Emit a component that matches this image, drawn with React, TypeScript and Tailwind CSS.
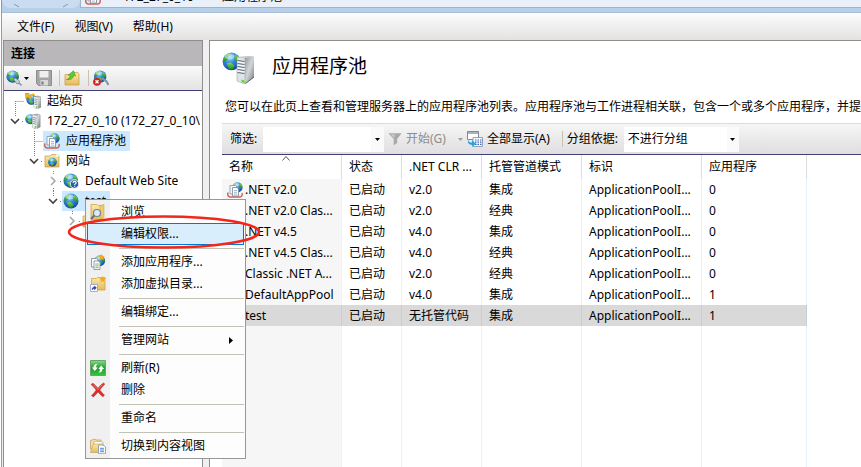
import clsx from "clsx";
import * as React from "react";

type IconProps = { className?: string };

function Defs() {
  return (
    <svg className="absolute size-0" aria-hidden="true">
      <defs>
        <radialGradient id="ocean" cx="0.4" cy="0.25" r="0.8">
          <stop offset="0" stopColor="#9bdcfb" />
          <stop offset="0.45" stopColor="#3388da" />
          <stop offset="1" stopColor="#163f96" />
        </radialGradient>
        <linearGradient id="land" x1="0" y1="0" x2="0" y2="1">
          <stop offset="0" stopColor="#7fd94a" />
          <stop offset="1" stopColor="#1e8a2c" />
        </linearGradient>
        <linearGradient id="steel" x1="0" y1="0" x2="1" y2="1">
          <stop offset="0" stopColor="#8d9194" />
          <stop offset="0.5" stopColor="#d3d6d8" />
          <stop offset="1" stopColor="#6f7376" />
        </linearGradient>
        <linearGradient id="folder" x1="0" y1="0" x2="0" y2="1">
          <stop offset="0" stopColor="#fbe9a9" />
          <stop offset="1" stopColor="#e5b95a" />
        </linearGradient>
        <linearGradient id="green" x1="0" y1="0" x2="0" y2="1">
          <stop offset="0" stopColor="#8ddc8a" />
          <stop offset="0.5" stopColor="#1f9d2b" />
          <stop offset="1" stopColor="#35c53c" />
        </linearGradient>
      </defs>
    </svg>
  );
}

function GlobeShape({ transform }: { transform?: string }) {
  return (
    <g transform={transform}>
      <circle cx="8" cy="8" r="7.5" fill="url(#ocean)" />
      <path d="M1.5 5 4 2 7 1.2 6.5 3.2 4.8 4.5 5 6.5 3 7.5 1 8.5Z" fill="url(#land)" />
      <path d="M11 2 13.5 3.500 15.300 7 14.500 9 12 8.500 10.500 5.500Z" fill="url(#land)" />
      <path d="M4 9.500 7.500 9 10.500 11.500 9 14.800 6 14.500Z" fill="url(#land)" />
      <ellipse cx="6.5" cy="4" rx="4" ry="2.4" fill="#fff" opacity="0.4" />
    </g>
  );
}

function ServerShape({ transform }: { transform?: string }) {
  return (
    <g transform={transform}>
      <path d="M0 1 5 0 9 1 9 13 4 15 0 13.5Z" fill="url(#steel)" stroke="#75797c" strokeWidth="0.5" />
      <path d="M0 1 5 2 5 15 0 13.5Z" fill="#eef0f1" />
      <path d="M0.5 3.5 4.7 4.2M0.5 5.5 4.7 6.2M0.5 7.5 4.7 8.2M0.5 9.5 4.7 10.2" stroke="#6c7a86" strokeWidth="0.8" />
      <path d="M2.5 12h2v1.8h-2z" fill="#4fd52d" />
    </g>
  );
}

function Svg({ children, className = "size-4" }: IconProps & { children: React.ReactNode }) {
  return (
    <svg viewBox="0 0 16 16" className={clsx("shrink-0", className)} aria-hidden="true">
      {children}
    </svg>
  );
}

function GlobeIcon() {
  return (
    <Svg>
      <GlobeShape />
    </Svg>
  );
}

function StartPageIcon() {
  return (
    <Svg>
      <GlobeShape transform="translate(1 1) scale(0.7)" />
      <path d="M0 0h4.5L3.3 1.7C6 2 7 4 6.5 6 5.5 4.5 4 4 2.3 4.2L1 6Z" fill="#f6b51e" stroke="#b87400" strokeWidth="0.4" />
      <path d="M6 2.5 8 1.2 9.5 2.2" stroke="#f6b51e" strokeWidth="1.6" fill="none" />
      <ServerShape transform="translate(9 3) scale(0.76 0.86)" />
    </Svg>
  );
}

function ServerIcon() {
  return (
    <Svg>
      <GlobeShape transform="translate(0 1) scale(0.66)" />
      <ServerShape transform="translate(7.5 1) scale(0.85 1)" />
    </Svg>
  );
}

function ServerLargeIcon() {
  return (
    <svg viewBox="0 0 32 32" className="size-8 shrink-0" aria-hidden="true">
      <GlobeShape transform="scale(1.18)" />
      <path d="M22 5.500 26 4l6 .5V25l-9 7z" fill="url(#steel)" />
      <path d="M15 5 23 6V32l-8-3z" fill="#dfe4e8" stroke="#8d959b" strokeWidth="0.5" />
      <path d="M15 5 24 4l8 .5-9 1.500z" fill="#c9cdd0" />
      <path d="M15.5 8.500 22.500 9.500M15.500 11.500 22.500 12.500M15.500 14.500 22.500 15.500M15.500 17.500 22.500 18.500M15.500 20.500 22.500 21.500" stroke="#5c6b78" strokeWidth="1.200" />
      <path d="M15.500 10 22.500 11M15.500 13 22.500 14M15.500 16 22.500 17M15.500 19 22.500 20" stroke="#fff" strokeWidth="1" />
      <path d="M19.500 27.500 22.500 28.500v2.500l-3-1z" fill="#55df22" />
      <path d="M23.500 31.500 32 25" stroke="#55595c" />
    </svg>
  );
}

function AppPoolIcon({ className }: IconProps) {
  return (
    <Svg className={className}>
      <GlobeShape transform="translate(5 0) scale(0.68)" />
      <path d="M1.200 10.500C.2 12.500.8 14.500 3 15h10c2-.4 2.600-2.300 2-4" fill="none" stroke="#cf6450" strokeWidth="1.500" />
      <path d="M3 3.500h5.500L10 5v7H3z" fill="#f4f8fc" stroke="#8296aa" strokeWidth="0.8" />
      <path d="M5.500 5.500H10L11.500 7v7h-6z" fill="#fff" stroke="#71869b" strokeWidth="0.8" />
      <path d="M7 8.500h3M7 10.300h3M7 12.100h3" stroke="#8fa4b8" strokeWidth="0.8" />
    </Svg>
  );
}

function SitesIcon() {
  return (
    <Svg>
      <path d="M1 3h5l1.500-1.500h6L15 3v11H1z" fill="url(#folder)" stroke="#c59b45" strokeWidth="0.7" />
      <path d="M12 1.500h2.500v2H12z" fill="#fff" />
      <GlobeShape transform="translate(3.800 4.500) scale(0.58)" />
    </Svg>
  );
}

function GlobeHelpIcon() {
  return (
    <Svg>
      <GlobeShape transform="scale(0.96)" />
      <circle cx="11.500" cy="11" r="4.300" fill="#2d5ea8" stroke="#fff" strokeWidth="0.9" />
      <path d="M10 10c0-2.200 3.200-2 3.200-.3 0 1.200-1.500 1-1.500 2.200M11.700 12.800v1" fill="none" stroke="#fff" strokeWidth="1.100" />
    </Svg>
  );
}

function ConnectIcon() {
  return (
    <Svg>
      <GlobeShape transform="scale(0.83)" />
      <path d="M7.500 9.500 9.500 8l4 3-.5 2.500-2 .5Z" fill="#c3d0d9" stroke="#5a6c7a" strokeWidth="0.6" />
      <path d="m13 13 2.500 2.500" stroke="#8298a8" strokeWidth="1.600" />
    </Svg>
  );
}

function DisconnectIcon() {
  return (
    <Svg>
      <GlobeShape transform="translate(0.500 0) scale(0.83)" />
      <path d="m9 8 4.500 3.500L15.500 15" stroke="#8298a8" strokeWidth="2.200" fill="none" />
      <circle cx="4" cy="11.800" r="3.900" fill="#d42020" />
      <path d="m2.500 10.300 3 3m0-3-3 3" stroke="#fff" strokeWidth="1.300" />
    </Svg>
  );
}

function SaveIcon() {
  return (
    <Svg>
      <path d="M.5.5h15v15h-13l-2-2z" fill="#a5a5a5" stroke="#8d8d8d" />
      <path d="M3.500 1h9v6.500h-9z" fill="#f0f0f0" />
      <path d="M4.500 10h7.500v5.500H4.500z" fill="#dadada" />
      <path d="M5.500 11.500h2v3h-2z" fill="#777" />
    </Svg>
  );
}

function UpFolderIcon() {
  return (
    <Svg>
      <path d="M1 4.500h6l1.500-2h5.500l1 1.500v11H1z" fill="url(#folder)" stroke="#c59b45" strokeWidth="0.700" />
      <path d="M2.500 9.500C5 9 6 7.500 6.200 5.200H4.200L9.500.8l2 5-1.800-.4c-.5 3-3 4.900-7.200 4.100z" fill="#5fc936" stroke="#2c8a1c" strokeWidth="0.500" />
    </Svg>
  );
}

function BrowseIcon() {
  return (
    <Svg>
      <path d="M1 .5h6l1 1h4v14H1z" fill="url(#folder)" stroke="#c59b45" strokeWidth="0.700" />
      <path d="M10 1.500 14 .5v13l-3 2z" fill="#f2cb69" stroke="#c59b45" strokeWidth="0.500" />
      <circle cx="7" cy="9" r="3.500" fill="#d6eefc" stroke="#6f8494" strokeWidth="1.200" />
      <path d="M4.300 11.500 1 15" stroke="#66727c" strokeWidth="2" />
    </Svg>
  );
}

function AddAppIcon() {
  return (
    <Svg>
      <GlobeShape transform="translate(4 1) scale(0.720)" />
      <path d="m11.500 0 1 1.800 2.200.4-1.500 1.600.3 2.200-2-1-2 1 .4-2.200L8.300 2.200l2.200-.4z" fill="#f7a823" />
      <path d="M1.500 4.500h5L8 6v7H1.500z" fill="#fff" stroke="#71869b" strokeWidth="0.800" />
      <path d="M4 7h4.500L10 8.500v7H4z" fill="#fff" stroke="#71869b" strokeWidth="0.800" />
      <path d="M5.300 10h3.400M5.300 11.800h3.400M5.300 13.600h3.400" stroke="#5f9e63" strokeWidth="0.800" />
    </Svg>
  );
}

function AddDirIcon() {
  return (
    <Svg>
      <path d="M1.500 2.500h5l1-1H15V14H1.500z" fill="url(#folder)" stroke="#c59b45" strokeWidth="0.700" />
      <path d="m12.500 0 1 2 2.500.5-1.800 1.600.4 2.400-2.100-1.200-2.100 1.200.4-2.400L9 2.500l2.500-.5z" fill="#f7a823" />
      <path d="M.5 8.500h7v7h-7z" fill="#fff" stroke="#8ba0c5" strokeWidth="0.800" />
      <path d="M2 14c0-2 .8-3 2.500-3V9.800L6.500 12l-2 1.800v-1C3.300 12.700 2.600 13 2 14z" fill="#2a3da8" stroke="#2a3da8" strokeWidth="0.400" />
    </Svg>
  );
}

function RefreshIcon() {
  return (
    <Svg>
      <path d="M.5.500h15v15H.5z" fill="url(#green)" stroke="#67a56c" />
      <path
        d="M7.500 4C4.500 3.800 3.500 5.500 3.500 7.500H1.800l3 3.500 3-3.500H6.200C6 6 6.300 5 7.500 4zM8.500 12.500c3 .2 4-1.500 4-3.500h1.700l-3-3.500-3 3.500h1.600c.2 1.500-.1 2.500-1.300 3.500z"
        fill="#fff"
      />
    </Svg>
  );
}

function DeleteIcon() {
  return (
    <Svg>
      <path d="M1 2.500 3 1.200C5 3 6.500 4.500 8 6.200 9.500 4.300 11.500 2.300 13.500 1l1.300 1C12.800 4 11.300 6 9.800 8c1.500 1.800 3 3.700 4.700 5.200l-1.700 1.600C11 13.200 9.500 11.500 8 9.900 6.500 11.700 5 13.400 3.300 15L1.500 13.500C3.300 12 4.800 10 6.200 8 4.600 6 3 4 1 2.500z" fill="#dd2d26" stroke="#b52222" strokeWidth="0.500" />
      <path d="m3 2.500 5 5 4.500-4.900" stroke="#f58b83" strokeWidth="0.800" fill="none" />
    </Svg>
  );
}

function ContentViewIcon() {
  return (
    <Svg>
      <path d="M.5 2.500 5 1l1 1h5v9H.5z" fill="#f6dfa0" stroke="#b79a62" strokeWidth="0.700" />
      <path d="M4 3.500h7l2 1v3H4z" fill="#fff" stroke="#b7a37b" strokeWidth="0.600" />
      <path d="M.5 14.500 3 6h10v8.500z" fill="url(#folder)" stroke="#c59b45" strokeWidth="0.600" />
      <path d="M8.500 7h4.500l2.500 2v6.700h-7z" fill="#fff" stroke="#7a91b0" strokeWidth="0.800" />
      <path d="M10 10.300h4M10 12h4M10 13.700h4" stroke="#4a7cc5" strokeWidth="0.900" />
    </Svg>
  );
}

function FunnelIcon() {
  return (
    <Svg className="size-3.5">
      <path d="M.5 1.500h15L10.500 8v4.500L6.500 15V8z" fill="#a9a9a9" />
      <path d="M3 2.500h5L7 7z" fill="#c8c8c8" />
    </Svg>
  );
}

function ShowAllIcon() {
  return (
    <Svg>
      <path d="M.5.500h11v8H.5z" fill="#fff" stroke="#7d8994" />
      <path d="M1 1h10v2H1z" fill="#a9b3bd" />
      <path d="M6 6.500h9.500v9H6z" fill="#f5f8fc" stroke="#7d8ea5" strokeWidth="0.800" />
      <path d="M8 9h1.500m1 0H12m1 0h1.500M8 11.200h1.500m1 0H12m1 0h1.500M8 13.400h1.500m1 0H12m1 0h1.500" stroke="#3d64b4" strokeWidth="1.200" />
      <path d="M1 8.500c.5 2.500 2 3 4 3V9.200l4 3.600-4 3v-2C2 13.800.5 12 1 8.500z" fill="#2ba0dd" />
    </Svg>
  );
}

function DownArrow({ className = "text-black" }: IconProps) {
  return (
    <svg viewBox="0 0 5 3" className={clsx("h-[3px] w-[5px] shrink-0", className)} aria-hidden="true">
      <path d="M0 0h5L2.500 3z" fill="currentColor" />
    </svg>
  );
}

function Separator() {
  return <span className="h-4 w-px shrink-0 bg-[#c5c2b0]" />;
}

const indents = ["pl-px", "pl-5", "pl-[39px]", "pl-[58px]"];

type Node = {
  id: string;
  label?: string;
  level: number;
  icon: () => React.ReactNode;
  open?: boolean;
  selected?: boolean;
  // dotted connectors around the toggle
  lines?: string;
};

const tree: Node[] = [
  { id: "start", label: "起始页", level: 0, icon: StartPageIcon, lines: "M10.500 10v10M10.500 10.500H20" },
  { id: "server", label: "172_27_0_10 (172_27_0_10\\", level: 0, icon: ServerIcon, open: true, lines: "M10.500 0v5M17 10.500h3" },
  { id: "pools", label: "应用程序池", level: 1, icon: AppPoolIcon, selected: true, lines: "M10.500 0v20M10.500 10.500H20" },
  { id: "sites", label: "网站", level: 1, icon: SitesIcon, open: true, lines: "M10.500 0v5M17 10.500h3" },
  { id: "default", label: "Default Web Site", level: 2, icon: GlobeHelpIcon, open: false, lines: "M10.500 0v4M10.500 17v3M17 10.500h3" },
  { id: "test", label: "test", level: 2, icon: GlobeIcon, open: true, selected: true, lines: "M10.500 0v5M17 10.500h3" },
  { id: "test-child", level: 3, icon: SitesIcon, open: false, lines: "M10.500 0v4M17 10.500h3" },
];

function TreeRow({ node }: { node: Node }) {
  const Icon = node.icon;
  return (
    <li role="treeitem" aria-expanded={node.open} className={clsx("flex h-5 items-center", indents[node.level])}>
      <svg viewBox="0 0 19 20" className="h-5 w-[19px] shrink-0" fill="none" aria-hidden="true">
        <path d={node.lines} stroke="#808080" strokeDasharray="1 1" />
        {node.open === true && <path d="m6 8 4 4 4-4" stroke="#404040" strokeWidth="1.600" />}
        {node.open === false && <path d="m8 6 4 4-4 4" stroke="#a6a6a6" strokeWidth="1.500" />}
      </svg>
      <button
        type="button"
        className={clsx("flex h-5 shrink-0 items-center gap-1.5 pr-1 pl-px whitespace-nowrap", node.selected && "bg-[#cce8ff]")}
      >
        <Icon />
        {node.label}
      </button>
    </li>
  );
}

const columns = [
  { label: "名称", width: "w-[120px]" },
  { label: "状态", width: "w-[60px]" },
  { label: ".NET CLR ...", width: "w-20" },
  { label: "托管管道模式", width: "w-[100px]" },
  { label: "标识", width: "w-[120px]" },
  { label: "应用程序", width: "w-[105px]" },
];

const pools = [
  [".NET v2.0", "已启动", "v2.0", "集成", "ApplicationPoolI...", "0"],
  [".NET v2.0 Clas...", "已启动", "v2.0", "经典", "ApplicationPoolI...", "0"],
  [".NET v4.5", "已启动", "v4.0", "集成", "ApplicationPoolI...", "0"],
  [".NET v4.5 Clas...", "已启动", "v4.0", "经典", "ApplicationPoolI...", "0"],
  ["Classic .NET A...", "已启动", "v2.0", "经典", "ApplicationPoolI...", "0"],
  ["DefaultAppPool", "已启动", "v4.0", "集成", "ApplicationPoolI...", "1"],
  ["test", "已启动", "无托管代码", "集成", "ApplicationPoolI...", "1"],
];

function PoolTable() {
  return (
    <table className="h-full w-[585px] table-fixed border-separate border-spacing-0 text-left whitespace-nowrap">
      <thead>
        <tr className="h-6">
          {columns.map(({ label, width }, i) => (
            <th key={label} scope="col" className={clsx("relative border-r border-[#dedede] py-0 pr-1 pl-[7px] font-normal", width)}>
              {label}
              {i === 0 && (
                <svg viewBox="0 0 8 5" className="absolute top-px left-1/2 h-[5px] w-2" fill="none" aria-hidden="true">
                  <path d="m.5 4.500 3.500-4 3.500 4" stroke="#555" />
                </svg>
              )}
            </th>
          ))}
        </tr>
      </thead>
      <tbody>
        {pools.map((pool) => {
          const selected = pool[0] === "test";
          return (
            <tr key={pool[0]} className={clsx("h-[21px]", selected && "bg-[#d9d9d9]")}>
              {pool.map((value, i) => (
                <td
                  key={columns[i].label}
                  className={clsx(
                    "border-r p-0",
                    i === 0 ? "pl-[5px]" : "pl-[7px]",
                    selected ? "border-[#c6cfd5]" : "border-[#e8f2fc]",
                    i === 0 && !selected && "bg-[#f6f6f6]",
                  )}
                >
                  {i === 0 ? (
                    <span className="flex items-center gap-0.5">
                      <AppPoolIcon />
                      {value}
                    </span>
                  ) : (
                    value
                  )}
                </td>
              ))}
            </tr>
          );
        })}
        <tr aria-hidden="true">
          {columns.map(({ label }, i) => (
            <td key={label} className={clsx("border-r border-[#e8f2fc] p-0", i === 0 && "bg-[#f6f6f6]")} />
          ))}
        </tr>
      </tbody>
    </table>
  );
}

type MenuItem = { label: string; icon?: () => React.ReactNode; active?: boolean; submenu?: boolean };

const menuGroups: MenuItem[][] = [
  [
    { label: "浏览", icon: BrowseIcon },
    { label: "编辑权限...", active: true },
  ],
  [
    { label: "添加应用程序...", icon: AddAppIcon },
    { label: "添加虚拟目录...", icon: AddDirIcon },
  ],
  [{ label: "编辑绑定..." }],
  [{ label: "管理网站", submenu: true }],
  [
    { label: "刷新(R)", icon: RefreshIcon },
    { label: "删除", icon: DeleteIcon },
  ],
  [{ label: "重命名" }],
  [{ label: "切换到内容视图", icon: ContentViewIcon }],
];

function ContextMenu() {
  return (
    <div
      role="menu"
      className="absolute top-[199px] left-[85px] w-[161px] border border-[#979797] bg-linear-to-r from-[#f0f0f0] from-[24px] to-[#fdfdfd] to-[24px] p-px"
    >
      {menuGroups.map((group, g) => (
        <React.Fragment key={group[0].label}>
          {g > 0 && (
            <div role="separator" className="flex h-1.5 items-center pl-8">
              <span className="h-px w-full bg-[#c3c3b5]" />
            </div>
          )}
          {group.map(({ label, icon: Icon, active, submenu }) => (
            <button
              key={label}
              type="button"
              role="menuitem"
              className={clsx(
                "flex h-[22px] w-full items-center border pr-2.5 pl-0.5 text-left whitespace-nowrap",
                active ? "border-[#0078d7] bg-[#d8eefc]" : "border-transparent",
              )}
            >
              <span className="flex w-[31px] shrink-0">{Icon && <Icon />}</span>
              {label}
              {submenu && (
                <svg viewBox="0 0 4 7" className="ml-auto h-[7px] w-1" aria-hidden="true">
                  <path d="M0 0v7l4-3.500z" />
                </svg>
              )}
            </button>
          ))}
        </React.Fragment>
      ))}
    </div>
  );
}

export default function App() {
  return (
    <div className="relative h-screen overflow-hidden bg-white pl-px font-['Noto_Sans','Noto_Sans_CJK_SC',sans-serif] text-xs text-black">
      <Defs />
      <div className="flex h-full flex-col border-l border-[#999] bg-[#f1f0f1]">
        <header className="h-[13px] shrink-0 border-b border-[#a9bdd3] bg-[#b7d0ea]">
          <div className="flex h-2 overflow-hidden">
            <div className="flex w-[78px] shrink-0 items-end justify-between rounded-b-full bg-[#c9dcf0] px-3 text-[#8497ab]">
              <svg viewBox="0 0 6 4" className="h-1 w-1.5" fill="none" aria-hidden="true">
                <path d="m0 0 5 3" stroke="currentColor" />
              </svg>
              <svg viewBox="0 0 6 4" className="h-1 w-1.5" fill="none" aria-hidden="true">
                <path d="m6 0-5 3" stroke="currentColor" />
              </svg>
            </div>
            <div className="flex flex-1 items-end border-b border-l border-[#9fb4cc] bg-[#e9f0fa] pb-0.5 pl-1">
              <AppPoolIcon />
              <span className="ml-[22px] w-[99px] shrink-0">172_27_0_10</span>
              <span>应用程序池</span>
            </div>
          </div>
        </header>

        <nav className="flex h-[27px] shrink-0 items-center gap-5 bg-linear-to-b from-[#fcfcfc] to-[#e4e2e1] px-[15px]">
          <button type="button">文件(F)</button>
          <button type="button">视图(V)</button>
          <button type="button">帮助(H)</button>
        </nav>

        <div className="flex min-h-0 flex-1 gap-1.5 pl-px">
          <aside className="flex w-[200px] shrink-0 flex-col overflow-hidden border border-b-0 border-[#8e8e8e] bg-white">
            <h2 className="flex h-[25px] shrink-0 items-center bg-[#bab7ba] pl-[7px] font-bold">连接</h2>
            <div className="flex h-[25px] shrink-0 items-center border-b border-[#3f3f74] bg-linear-to-b from-[#fafafa] to-[#e4e2e3] pl-0.5">
              <button type="button" aria-label="创建新连接" className="flex items-center gap-0.5">
                <ConnectIcon />
                <DownArrow />
              </button>
              <button type="button" aria-label="保存连接" className="mr-[7px] ml-[7px]">
                <SaveIcon />
              </button>
              <Separator />
              <button type="button" aria-label="向上" className="mr-2 ml-1">
                <UpFolderIcon />
              </button>
              <Separator />
              <button type="button" aria-label="删除连接" className="ml-1">
                <DisconnectIcon />
              </button>
            </div>
            <ul role="tree">
              {tree.map((node) => (
                <TreeRow key={node.id} node={node} />
              ))}
            </ul>
          </aside>

          <main className="flex min-w-0 flex-1 flex-col border-t border-l border-[#8e8e8e] bg-white pl-3">
            <div className="flex h-[54px] shrink-0 items-center gap-[18px]">
              <ServerLargeIcon />
              <h1 className="pb-1 text-[19px] leading-6">应用程序池</h1>
            </div>
            <p className="h-7 shrink-0 overflow-hidden pt-0.5 pl-[3px] leading-5 whitespace-nowrap">
              您可以在此页上查看和管理服务器上的应用程序池列表。应用程序池与工作进程相关联，包含一个或多个应用程序，并提
            </p>
            <div className="flex h-8 shrink-0 items-center border-t border-b border-t-[#dcdcdc] border-b-[#3f3f74] bg-linear-to-b from-[#f6f6f6] to-[#e0dee0] pl-2 whitespace-nowrap">
              <label htmlFor="filter" className="w-[33px] shrink-0">
                筛选:
              </label>
              <div className="flex h-[25px] w-[121px] shrink-0 items-center bg-white">
                <input id="filter" type="text" className="h-full min-w-0 flex-1 px-1 outline-none" />
                <button type="button" aria-label="筛选历史" className="flex h-full w-[13px] items-center justify-center bg-[#fafafa]">
                  <DownArrow />
                </button>
              </div>
              <button type="button" className="ml-1 flex items-center gap-1 text-[#8c8c8c]">
                <FunnelIcon />
                开始(G)
                <DownArrow className="ml-2 text-[#a0a0a0]" />
              </button>
              <button type="button" className="ml-1 flex items-center gap-1">
                <ShowAllIcon />
                全部显示(A)
              </button>
              <span className="mr-1 ml-3 flex">
                <Separator />
              </span>
              <label htmlFor="group" className="w-[57px] shrink-0">
                分组依据:
              </label>
              <div className="relative h-[25px] w-[115px] shrink-0">
                <select id="group" defaultValue="none" className="h-full w-full appearance-none bg-white pl-1 outline-none">
                  <option value="none">不进行分组</option>
                </select>
                <span className="pointer-events-none absolute inset-y-0 right-0 flex w-3 items-center justify-center bg-[#fafafa]">
                  <DownArrow />
                </span>
              </div>
            </div>
            <div className="min-h-0 flex-1 overflow-hidden">
              <PoolTable />
            </div>
          </main>
        </div>
      </div>

      <ContextMenu />
      <svg viewBox="0 0 196 36" className="pointer-events-none absolute top-[214px] left-[66px] h-9 w-[196px]" fill="none" aria-hidden="true">
        <ellipse cx="98" cy="18" rx="95" ry="15.500" stroke="#f3261b" strokeWidth="2.600" />
      </svg>
    </div>
  );
}
